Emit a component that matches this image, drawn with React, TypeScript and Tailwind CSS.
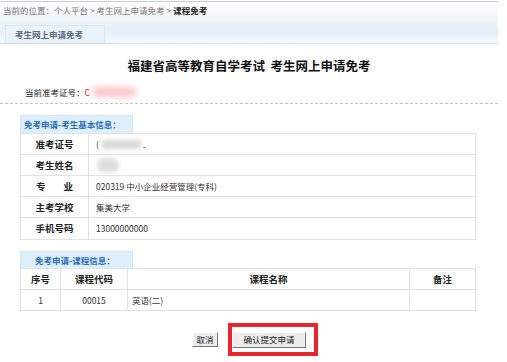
import React from "react";

const font = { fontFamily: '"Noto Sans CJK SC", "Liberation Sans", sans-serif' };

function InfoRow({ label, children, last }: { label: React.ReactNode; children?: React.ReactNode; last?: boolean }) {
  return (
    <div className={`flex h-[21px] ${last ? "" : "border-b border-[#e2e2e2]"}`}>
      <div className="w-[68px] shrink-0 border-r border-[#e2e2e2] flex items-center justify-center text-[9.5px] font-bold text-[#222]">
        {label}
      </div>
      <div className="flex-1 flex items-center pl-[7px] text-[8.5px] text-[#333]">{children}</div>
    </div>
  );
}

export default function App() {
  return (
    <div className="w-[507px] h-[362px] bg-white overflow-hidden" style={font}>
      <div className="w-[498px]">
        {/* breadcrumb */}
        <div className="mt-px h-[17px] border-t border-[#c9cdd1] bg-gradient-to-b from-white to-[#f2f6f8] flex items-center pl-[3px] text-[8.5px] text-[#777] leading-none whitespace-nowrap">
          <span>当前的位置：个人平台 &gt; 考生网上申请免考 &gt; </span>
          <span className="font-bold text-[#222] ml-[2px]">课程免考</span>
        </div>
        {/* tab bar */}
        <div className="h-[26px] bg-gradient-to-b from-[#f3f8fc] via-[#e4eef8] to-[#f4f8fc] border-b border-[#cfdde6] flex items-end pl-[5px]">
          <div className="w-[100px] h-[18px] bg-[#eaf2fa] border border-b-0 border-[#d8e4ee] flex items-center pl-[9px] text-[8.5px] font-bold text-[#5a6e80] leading-none whitespace-nowrap">
            考生网上申请免考
          </div>
        </div>
        {/* title */}
        <div className="mt-[14px] h-[17px] flex items-center justify-center text-[12.5px] font-bold text-[#111] leading-none whitespace-nowrap">
          福建省高等教育自学考试&nbsp;&nbsp;考生网上申请免考
        </div>
        {/* current no */}
        <div className="mt-[10px] h-[14px] flex items-center pl-[25px] text-[8.5px] text-[#222] leading-none">
          <span>当前准考证号：</span>
          <span className="text-[#d42020]">C</span>
          <span className="ml-[2px] w-[44px] h-[10px] rounded-full bg-[#fbc5c8] blur-[3px]"></span>
        </div>
        <div className="mt-[4px] border-t border-dashed border-[#c4c4c4]"></div>

        {/* section 1 */}
        <div className="mt-[11px] ml-[20px] w-[456px]">
          <div className="w-[113px] h-[18px] bg-[#ddeefc] border border-b-0 border-[#d2e4f3] flex items-center pl-[3px] text-[8.5px] font-bold text-[#2c6db3] leading-none whitespace-nowrap">
            免考申请-考生基本信息：
          </div>
          <div className="border border-[#e2e2e2]">
            <InfoRow label="准考证号">
              <span>(</span>
              <span className="ml-[2px] w-[40px] h-[9px] rounded bg-[#d8d8d8] blur-[2px]"></span>
              <span className="ml-[2px]">.</span>
            </InfoRow>
            <InfoRow label="考生姓名">
              <span className="ml-[1px] w-[22px] h-[14px] rounded-full bg-[#dcdcdc] blur-[2px]"></span>
            </InfoRow>
            <InfoRow label={<span className="flex gap-[18px]"><span>专</span><span>业</span></span>}>
              020319 中小企业经营管理(专科)
            </InfoRow>
            <InfoRow label="主考学校">集美大学</InfoRow>
            <InfoRow label="手机号码" last>
              13000000000
            </InfoRow>
          </div>
        </div>

        {/* section 2 */}
        <div className="mt-[11px] ml-[20px] w-[456px]">
          <div className="w-[113px] h-[17px] bg-[#ddeefc] border border-b-0 border-[#d2e4f3] flex items-center pl-[14px] text-[8.5px] font-bold text-[#2c6db3] leading-none whitespace-nowrap">
            免考申请-课程信息：
          </div>
          <div className="border border-[#e2e2e2]">
            <div className="flex h-[21px] border-b border-[#e2e2e2] text-[9.5px] font-bold text-[#222]">
              <div className="w-[40px] border-r border-[#e2e2e2] flex items-center justify-center">序号</div>
              <div className="w-[67px] border-r border-[#e2e2e2] flex items-center justify-center">课程代码</div>
              <div className="w-[282px] border-r border-[#e2e2e2] flex items-center justify-center">课程名称</div>
              <div className="flex-1 flex items-center justify-center">备注</div>
            </div>
            <div className="flex h-[20px] text-[8.5px] text-[#333]">
              <div className="w-[40px] border-r border-[#e2e2e2] flex items-center justify-center">1</div>
              <div className="w-[67px] border-r border-[#e2e2e2] flex items-center justify-center">00015</div>
              <div className="w-[282px] border-r border-[#e2e2e2] flex items-center pl-[4px]">英语(二)</div>
              <div className="flex-1"></div>
            </div>
          </div>
        </div>

        {/* buttons */}
        <div className="mt-[12px] flex items-center pl-[192px]">
          <button className="w-[26px] h-[15px] bg-[#ececec] border border-[#fff] border-r-[#777] border-b-[#777] flex items-center justify-center text-[8.5px] text-[#222] leading-none">
            取消
          </button>
          <div className="ml-[10px] w-[90px] h-[33px] border-[4px] border-[#e8252d] flex items-center">
            <button className="w-[74px] h-[16px] bg-[#ececec] border border-[#fff] border-r-[#777] border-b-[#777] flex items-center justify-center text-[8.5px] text-[#222] leading-none whitespace-nowrap">
              确认提交申请
            </button>
          </div>
        </div>
      </div>
    </div>
  );
}
